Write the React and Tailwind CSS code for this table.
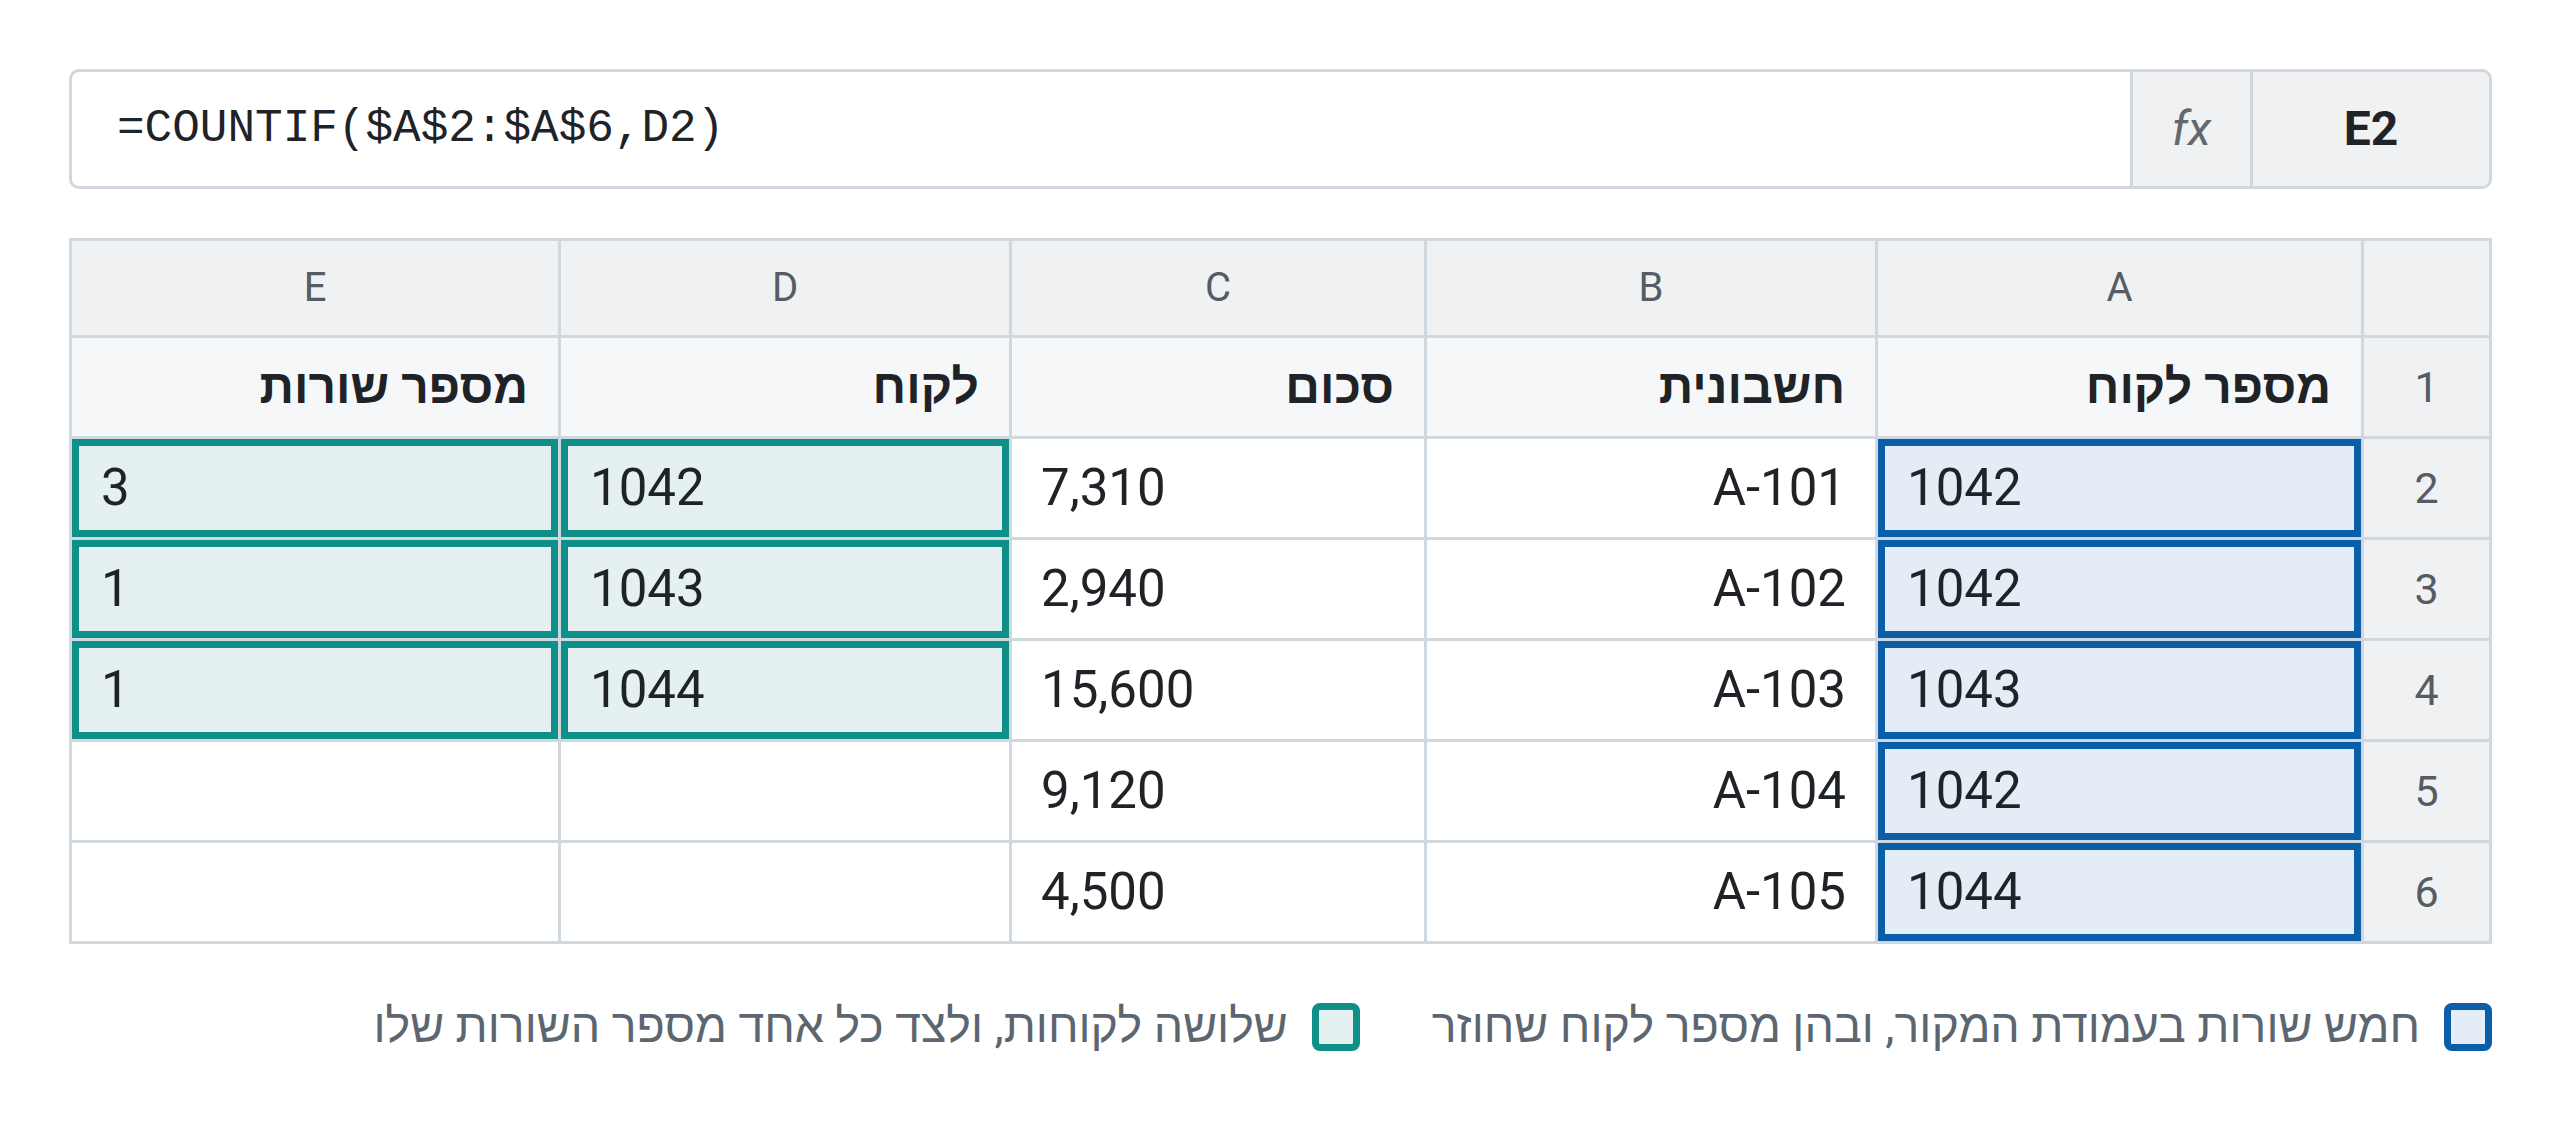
const rows = [
    { n: '2', a: '1042', b: 'A-101', c: '7,310', d: '1042', e: '3' },
    { n: '3', a: '1042', b: 'A-102', c: '2,940', d: '1043', e: '1' },
    { n: '4', a: '1043', b: 'A-103', c: '15,600', d: '1044', e: '1' },
    { n: '5', a: '1042', b: 'A-104', c: '9,120', d: '', e: '' },
    { n: '6', a: '1044', b: 'A-105', c: '4,500', d: '', e: '' },
];

const blueCell = 'bg-[#e4ecf6] shadow-[inset_0_0_0_7px_#0b5fa8]';
const tealCell = 'bg-[#e5f1f0] shadow-[inset_0_0_0_7px_#0f8f87]';

function ColHead({ children }) {
    return <div className="flex items-center justify-center bg-[#f0f1f2] text-[40px] text-[#555c63]">{children}</div>;
}

function RowHead({ children }) {
    return <div className="flex items-center justify-center bg-[#f0f1f2] text-[43px] text-[#555c63]">{children}</div>;
}

function Cell({ children, className = '', right = false }) {
    return (
        <div className={`flex items-center px-[29px] text-[51px] text-[#1f2328] ${right ? 'justify-start' : 'justify-end'} ${className}`}>
            <span dir="ltr">{children}</span>
        </div>
    );
}

export default function App() {
    return (
        <div className="min-h-screen bg-white pt-[69px] pr-[68px] pl-[69px] font-['Roboto',sans-serif]">
            {/* Formula bar */}
            <div className="flex h-[120px] overflow-hidden rounded-[10px] border-[3px] border-[#d0d7de] bg-white">
                <div className="flex flex-1 items-center pl-[45px] font-['Liberation_Mono',monospace] text-[46px] text-[#1f2328]">
                    =COUNTIF($A$2:$A$6,D2)
                </div>
                <div className="flex w-[120px] items-center justify-center border-l-[3px] border-[#d0d7de] bg-[#f0f1f2] text-[48px] text-[#62696e] italic">
                    fx
                </div>
                <div className="flex w-[239px] items-center justify-center border-l-[3px] border-[#d0d7de] bg-[#f0f1f2] text-[48px] font-bold text-[#1f2328]">
                    E2
                </div>
            </div>

            {/* Sheet */}
            <div
                dir="rtl"
                className="mt-[49px] grid grid-cols-[125px_483px_448px_412px_448px_486px] grid-rows-[94px_repeat(6,98px)] gap-[3px] bg-[#d0d8df] p-[3px]"
            >
                <div className="bg-[#f0f1f2]" />
                <ColHead>A</ColHead>
                <ColHead>B</ColHead>
                <ColHead>C</ColHead>
                <ColHead>D</ColHead>
                <ColHead>E</ColHead>

                <RowHead>1</RowHead>
                <div className="flex items-center bg-[#f6f7f8] px-[30px] text-[48px] font-bold text-[#1f2328]">מספר לקוח</div>
                <div className="flex items-center bg-[#f6f7f8] px-[30px] text-[48px] font-bold text-[#1f2328]">חשבונית</div>
                <div className="flex items-center bg-[#f6f7f8] px-[30px] text-[48px] font-bold text-[#1f2328]">סכום</div>
                <div className="flex items-center bg-[#f6f7f8] px-[30px] text-[48px] font-bold text-[#1f2328]">לקוח</div>
                <div className="flex items-center bg-[#f6f7f8] px-[30px] text-[48px] font-bold text-[#1f2328]">מספר שורות</div>

                {rows.map((r) => (
                    <div key={r.n} className="contents">
                        <RowHead>{r.n}</RowHead>
                        <Cell className={blueCell}>{r.a}</Cell>
                        <Cell className="bg-white" right>
                            {r.b}
                        </Cell>
                        <Cell className="bg-white">{r.c}</Cell>
                        <Cell className={r.d ? tealCell : 'bg-white'}>{r.d}</Cell>
                        <Cell className={r.e ? tealCell : 'bg-white'}>{r.e}</Cell>
                    </div>
                ))}
            </div>

            {/* Legend */}
            <div dir="rtl" className="mt-[48px] flex items-center gap-[72px] text-[46.5px] text-[#5c6670]">
                <div className="flex items-center gap-[24px]">
                    <span className="h-[48px] w-[48px] shrink-0 rounded-[8px] border-[7px] border-[#0b5fa8] bg-[#e4ecf6]" />
                    <span>חמש שורות בעמודת המקור, ובהן מספר לקוח שחוזר</span>
                </div>
                <div className="flex items-center gap-[24px]">
                    <span className="h-[48px] w-[48px] shrink-0 rounded-[8px] border-[7px] border-[#0f8f87] bg-[#e5f1f0]" />
                    <span>שלושה לקוחות, ולצד כל אחד מספר השורות שלו</span>
                </div>
            </div>
        </div>
    );
}
